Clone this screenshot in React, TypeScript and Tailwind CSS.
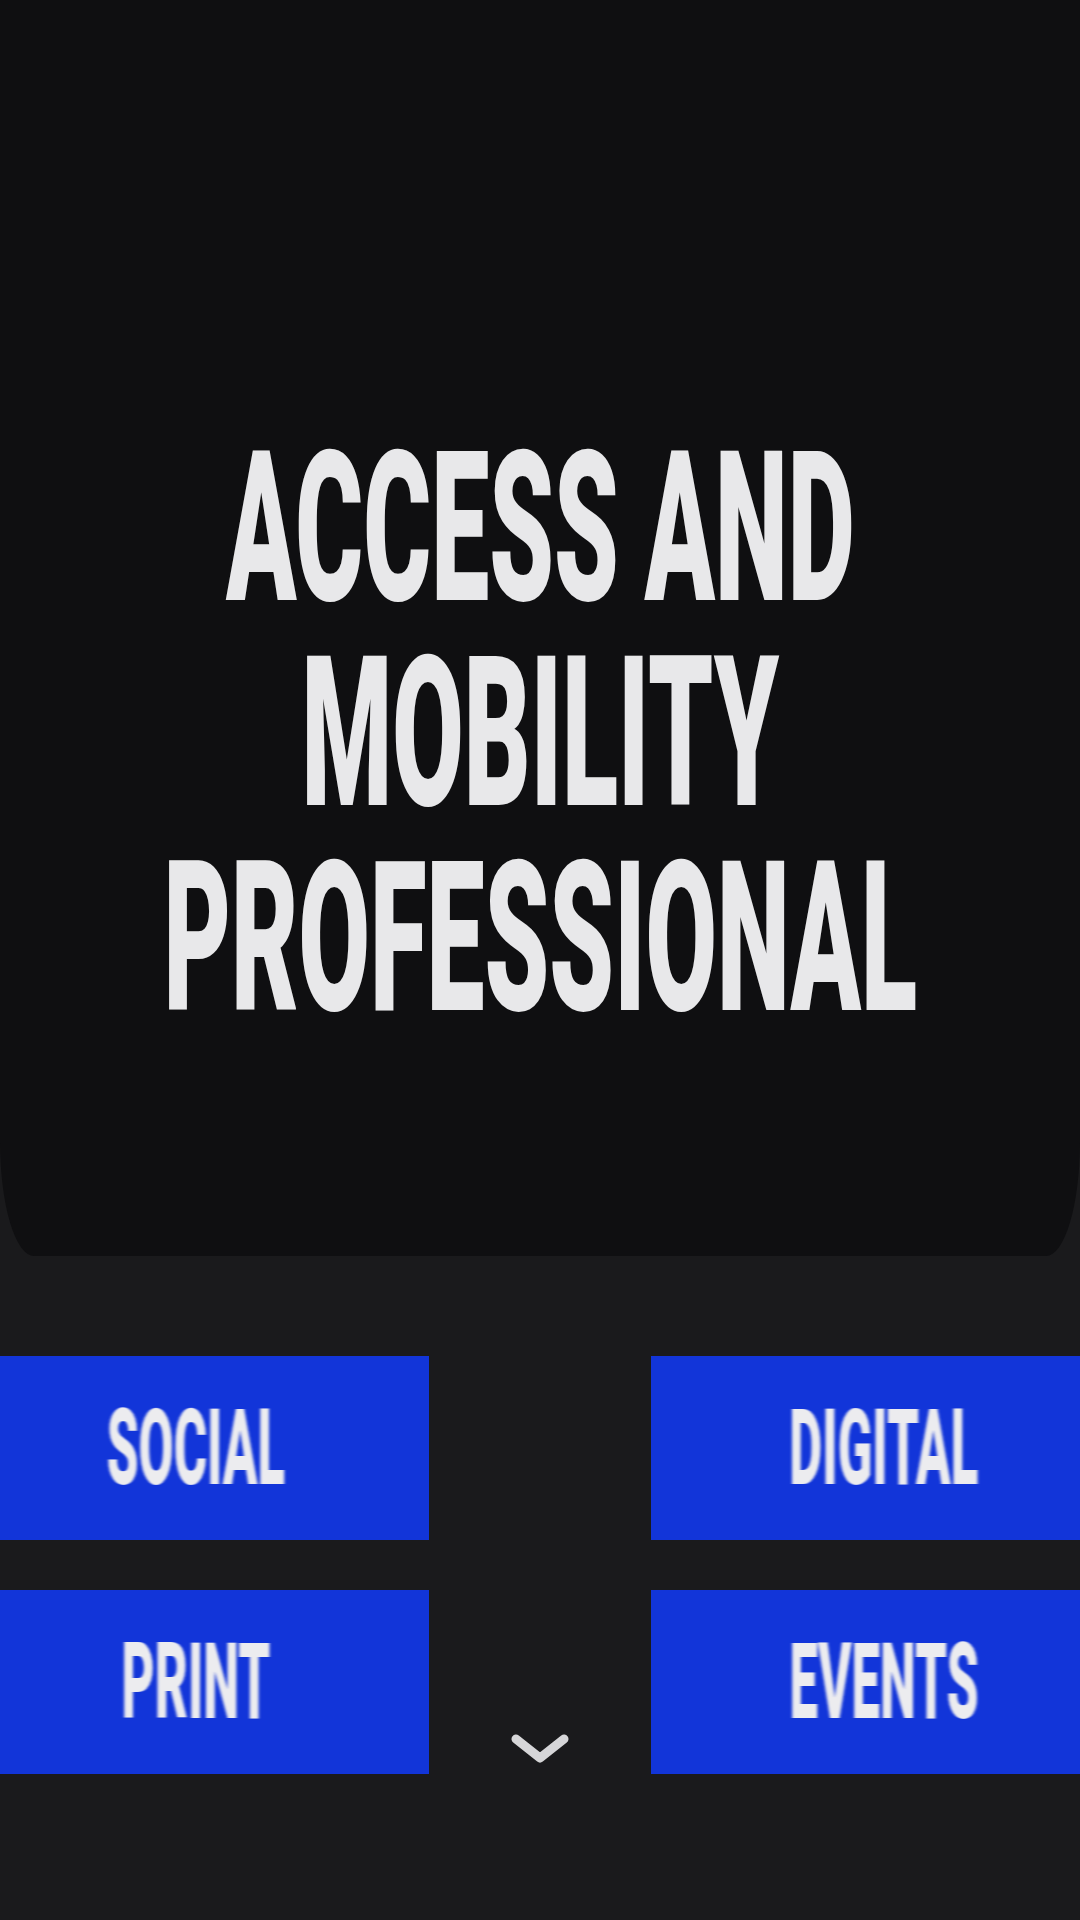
const headline = ['ACCESS AND', 'MOBILITY', 'PROFESSIONAL'];

const services = [
  { label: 'SOCIAL', slot: 'col-start-1 row-start-1' },
  { label: 'DIGITAL', slot: 'col-start-3 row-start-1' },
  { label: 'PRINT', slot: 'col-start-1 row-start-2' },
  { label: 'EVENTS', slot: 'col-start-3 row-start-2' },
];

function ServiceTile({ label, slot }: { label: string; slot: string }) {
  return (
    <a
      href="#"
      className={`${slot} flex h-[184px] items-center justify-center bg-[#1235d9] text-[#ececef]`}
    >
      <span className="scale-x-[0.48] whitespace-nowrap text-[106px] leading-none font-black [filter:url(#hblur)]">
        {label}
      </span>
    </a>
  );
}

export default function App() {
  return (
    <div className="min-h-[1920px] overflow-hidden bg-[#1a1a1c] font-['Roboto','Liberation_Sans',sans-serif]">
      {/* horizontal motion blur used by the tile labels */}
      <svg className="absolute h-0 w-0" aria-hidden="true">
        <defs>
          <filter id="hblur" x="-10%" y="0" width="120%" height="100%">
            <feGaussianBlur stdDeviation="3.4 0" />
          </filter>
        </defs>
      </svg>

      <section className="flex h-[1256px] flex-col items-center bg-[#0f0f11] pt-[426px] rounded-bl-[34px_115px] rounded-br-[34px_115px]">
        <h1 className="flex scale-x-[0.493] flex-col items-center text-[210px] leading-[205px] font-black text-[#e8e8ea]">
          {headline.map((line) => (
            <span key={line} className="whitespace-nowrap">
              {line}
            </span>
          ))}
        </h1>
      </section>

      <nav className="-mx-[37px] mt-[100px] grid grid-cols-[466px_1fr_466px] grid-rows-[184px_184px] gap-y-[50px]">
        {services.map((s) => (
          <ServiceTile key={s.label} label={s.label} slot={s.slot} />
        ))}
        <div className="col-start-2 row-start-2 flex items-end justify-center pb-[7px]">
          <svg width="60" height="34" viewBox="0 0 60 34" fill="none" aria-label="Scroll down">
            <path
              d="M6 6L30 25L54 6"
              stroke="#d6d6d8"
              strokeWidth="9"
              strokeLinecap="round"
              strokeLinejoin="round"
            />
          </svg>
        </div>
      </nav>
    </div>
  );
}
